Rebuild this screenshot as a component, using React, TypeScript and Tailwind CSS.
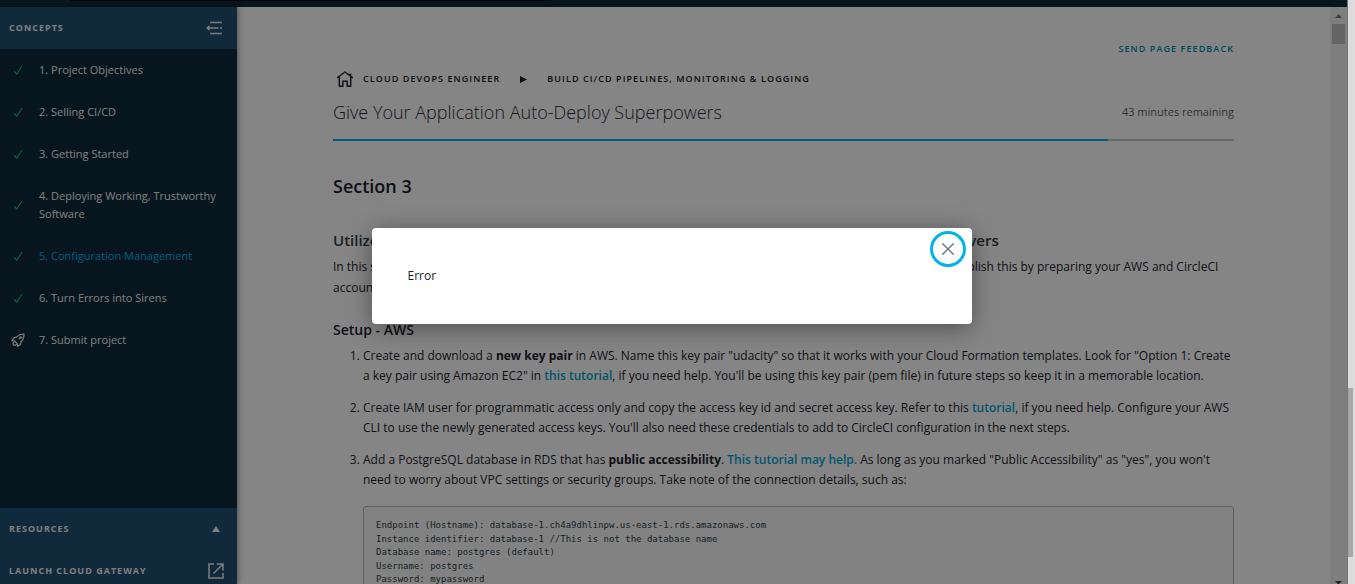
import React from 'react';

type Lesson = { title: string; status: 'done' | 'project'; active?: boolean };

const lessons: Lesson[] = [
  { title: '1. Project Objectives', status: 'done' },
  { title: '2. Selling CI/CD', status: 'done' },
  { title: '3. Getting Started', status: 'done' },
  { title: '4. Deploying Working, Trustworthy Software', status: 'done' },
  { title: '5. Configuration Management', status: 'done', active: true },
  { title: '6. Turn Errors into Sirens', status: 'done' },
  { title: '7. Submit project', status: 'project' },
];

const connectionDetails = `Endpoint (Hostname): database-1.ch4a9dhlinpw.us-east-1.rds.amazonaws.com
Instance identifier: database-1 //This is not the database name
Database name: postgres (default)
Username: postgres
Password: mypassword`;

function CheckIcon() {
  return (
    <svg className="h-3 w-3" viewBox="0 0 12 12" fill="none" stroke="#12b86a" strokeWidth="1.2" aria-hidden="true">
      <path d="M2 7.2 4.8 10 10 2" />
    </svg>
  );
}

function RocketIcon() {
  return (
    <svg className="h-4 w-4" viewBox="0 0 16 16" fill="none" stroke="#f2f2f2" strokeWidth="1.2" strokeLinejoin="round" aria-hidden="true">
      <path d="M14 2C10.600 2 8.200 3 6.600 5.200L4 5.800 2 8.800l2.600.2 2.800 2.800.2 2.700 2.800-2 .6-2.800C13.200 8 14 5.400 14 2Z" />
      <path d="M4.600 9 3 11.400 3.400 13l1.500.3L7.400 11.800M9 7l1-1" />
      <circle cx="10.600" cy="5.500" r=".7" />
    </svg>
  );
}

function CollapseIcon() {
  return (
    <svg className="h-4 w-4" viewBox="0 0 16 16" fill="none" aria-hidden="true">
      <path d="M4 2.500h12M4 13.500h12" stroke="#f2f2f2" strokeWidth="1.300" />
      <path d="M2 8h10.500M14 8h2" stroke="#f2f2f2" strokeWidth="1.700" />
      <path d="M0 8l3.500-3v6z" fill="#f2f2f2" />
    </svg>
  );
}

function LaunchIcon() {
  return (
    <svg className="h-4 w-4" viewBox="0 0 16 16" fill="none" stroke="#f2f2f2" strokeWidth="1.500" aria-hidden="true">
      <path d="M6 1H1v14h14V10M8.500 1H15v6.500M15 1 5.500 10.500" />
    </svg>
  );
}

function HomeIcon() {
  return (
    <svg className="h-4 w-4" viewBox="0 0 16 16" fill="none" stroke="#20242e" strokeWidth="1.500" strokeLinejoin="round" aria-hidden="true">
      <path d="M0 7 8 1l8 6M13.500 2.500v2.500M2.300 6v9.200h3.500v-5h4.400v5h3.500V6" />
    </svg>
  );
}

function Sidebar() {
  return (
    <aside className="z-10 flex w-[237px] shrink-0 flex-col bg-[#0d2a3a] shadow-[1px_0_6px_rgba(0,0,0,0.4)]">
      <div className="flex h-[42px] shrink-0 items-center justify-between bg-[#1f5173] pr-[15px] pl-[9px]">
        <h2 className="text-[9px] font-bold tracking-[1px] text-[#f2f2f2]">CONCEPTS</h2>
        <button aria-label="Collapse sidebar"><CollapseIcon /></button>
      </div>
      <nav className="min-h-0 flex-1 overflow-hidden">
        <ul>
          {lessons.map((l) => (
            <li key={l.title}>
              <a href="#lesson" className="flex items-center py-3 pr-4 text-[11px] leading-[18px]">
                <span className="flex w-9 shrink-0 justify-center">
                  {l.status === 'done' ? <CheckIcon /> : <RocketIcon />}
                </span>
                <span className={l.active ? 'pl-[3px] text-[#02b3e4]' : 'pl-[3px] text-[#f2f2f2]'}>{l.title}</span>
              </a>
            </li>
          ))}
        </ul>
      </nav>
      <div className="h-[76px] shrink-0 overflow-hidden bg-[#1f5173] text-[9px] font-bold text-[#f2f2f2]">
        <button className="flex h-[42px] w-full items-center justify-between pr-[17px] pl-[9px] tracking-[1px]">
          RESOURCES
          <svg className="h-[6px] w-2" viewBox="0 0 8 6" aria-hidden="true"><path d="M4 0 8 6H0z" fill="#f2f2f2" /></svg>
        </button>
        <a href="#gateway" className="flex h-[42px] items-center justify-between pr-[13px] pl-[9px] tracking-[1px]">
          LAUNCH CLOUD GATEWAY
          <LaunchIcon />
        </a>
      </div>
    </aside>
  );
}

function TextLink({ children }: { children: React.ReactNode }) {
  return <a href="#tutorial" className="font-semibold text-[#02a5d3]">{children}</a>;
}

function LessonPage() {
  return (
    <main className="min-w-0 flex-1 overflow-hidden">
      <div className="mx-auto max-w-[901px]">
        <div className="flex justify-end pt-[34px]">
          <a href="#feedback" className="text-[9px] leading-4 font-semibold tracking-[0.12em] text-[#0289ae]">SEND PAGE FEEDBACK</a>
        </div>
        <nav className="mt-[14px] flex h-4 items-center pl-1 text-[9px] font-semibold tracking-[0.12em] text-[#171a24]">
          <a href="#home" aria-label="Home"><HomeIcon /></a>
          <a href="#program" className="ml-[10px]">CLOUD DEVOPS ENGINEER</a>
          <svg className="mx-5 h-[7px] w-[7px]" viewBox="0 0 7 7" aria-hidden="true"><path d="M0 0 7 3.500 0 7z" fill="#171a24" /></svg>
          <a href="#course">BUILD CI/CD PIPELINES, MONITORING &amp; LOGGING</a>
        </nav>
        <div className="mt-[11px] flex items-center justify-between">
          <h1 className="text-[18px] leading-7 font-light text-[#2b2b3b]">Give Your Application Auto-Deploy Superpowers</h1>
          <span className="text-[11px] text-[#58646d]">43 minutes remaining</span>
        </div>
        <div className="mt-[13px] h-[2px] rounded-full bg-[#c4c9cf]">
          <div className="h-full w-[86%] bg-[#02b3e4]" />
        </div>

        <article className="pt-[31px] text-[12px] leading-5 text-[#1c1e2c]">
          <h2 className="text-[18px] leading-7 font-semibold">Section 3</h2>
          <h3 className="mt-[30px] text-[15px] leading-5 font-semibold text-[#2e3d49]">
            Utilize a Configuration Management Tool to Accomplish Deployment to Cloud-Based Servers
          </h3>
          <p className="mt-[6px] leading-[21px]">
            In this section, you will practice creating and configuring infrastructure before deploying code to it. You will accomplish this by preparing your AWS and CircleCI accounts just a bit, then by building Ansible Playbooks for use in your CircleCI configuration.
          </p>
          <h3 className="mt-[22px] text-[14px] leading-5 font-semibold">Setup - AWS</h3>
          <ol className="mt-[6px] list-decimal space-y-3 pl-[30px]">
            <li>
              Create and download a <strong>new key pair</strong> in AWS. Name this key pair "udacity" so that it works with your Cloud Formation templates. Look for "Option 1: Create a key pair using Amazon EC2" in <TextLink>this tutorial</TextLink>, if you need help. You'll be using this key pair (pem file) in future steps so keep it in a memorable location.
            </li>
            <li>
              Create IAM user for programmatic access only and copy the access key id and secret access key. Refer to this <TextLink>tutorial</TextLink>, if you need help. Configure your AWS CLI to use the newly generated access keys. You'll also need these credentials to add to CircleCI configuration in the next steps.
            </li>
            <li>
              Add a PostgreSQL database in RDS that has <strong>public accessibility</strong>. <TextLink>This tutorial may help.</TextLink> As long as you marked "Public Accessibility" as "yes", you won't need to worry about VPC settings or security groups. Take note of the connection details, such as:
              <pre className="mt-4 rounded-[3px] border border-[#b8b8b8] bg-[#fafafa] px-3 py-3 font-['DejaVu_Sans_Mono',monospace] text-[9px] leading-normal text-[#2e3d49]">{connectionDetails}</pre>
            </li>
          </ol>
        </article>
      </div>
    </main>
  );
}

function ScrollTrack() {
  return (
    <div className="flex w-[17px] shrink-0 flex-col items-center bg-[#f1f1f1] pt-[7px]" aria-hidden="true">
      <svg className="h-1 w-[7px]" viewBox="0 0 7 4"><path d="M3.500 0 7 4H0z" fill="#808080" /></svg>
      <div className="mt-[6px] h-5 w-[13px] bg-[#c1c1c1]" />
      <svg className="mt-auto h-[3px] w-[7px]" viewBox="0 0 7 3"><path d="M0 0h7L4 3H3z" fill="#404040" /></svg>
    </div>
  );
}

function ErrorDialog() {
  return (
    <div className="absolute inset-0 z-20 flex items-start justify-center bg-black/48 pt-[228px] pr-5 pl-4">
      <div role="dialog" aria-modal="true" aria-label="Error" className="relative w-full max-w-[600px] rounded-[4px] bg-white p-9 shadow-[0_4px_24px_rgba(0,0,0,0.4)]">
        <p className="text-[12px] leading-6 text-[#1c1e2c]">Error</p>
        <button aria-label="Close" className="absolute top-[3px] right-[6px] flex h-9 w-9 items-center justify-center rounded-full border-3 border-[#02b3e4]">
          <svg className="h-3 w-3" viewBox="0 0 12 12" fill="none" stroke="#6a7883" strokeWidth="1.400" strokeLinecap="round" aria-hidden="true">
            <path d="M.7.7l10.600 10.600M11.300.7.7 11.300" />
          </svg>
        </button>
      </div>
    </div>
  );
}

export default function App() {
  return (
    <div className="flex h-screen overflow-hidden bg-[#dcdcdc] font-['Open_Sans',sans-serif]">
      <div className="relative flex min-w-0 flex-1 flex-col bg-white">
        <header className="h-[7px] shrink-0 bg-[#0d2a3a]">
          <div className="ml-[70px] h-px w-[480px] bg-[#050a10]" />
        </header>
        <div className="flex min-h-0 flex-1">
          <Sidebar />
          <LessonPage />
          <ScrollTrack />
        </div>
        <ErrorDialog />
      </div>
      <div className="flex w-2 shrink-0 flex-col border-l border-[#777777]" aria-hidden="true">
        <div className="h-[388px] shrink-0" />
        <div className="h-[169px] w-[5px] bg-[#a8a8a8]" />
      </div>
    </div>
  );
}
